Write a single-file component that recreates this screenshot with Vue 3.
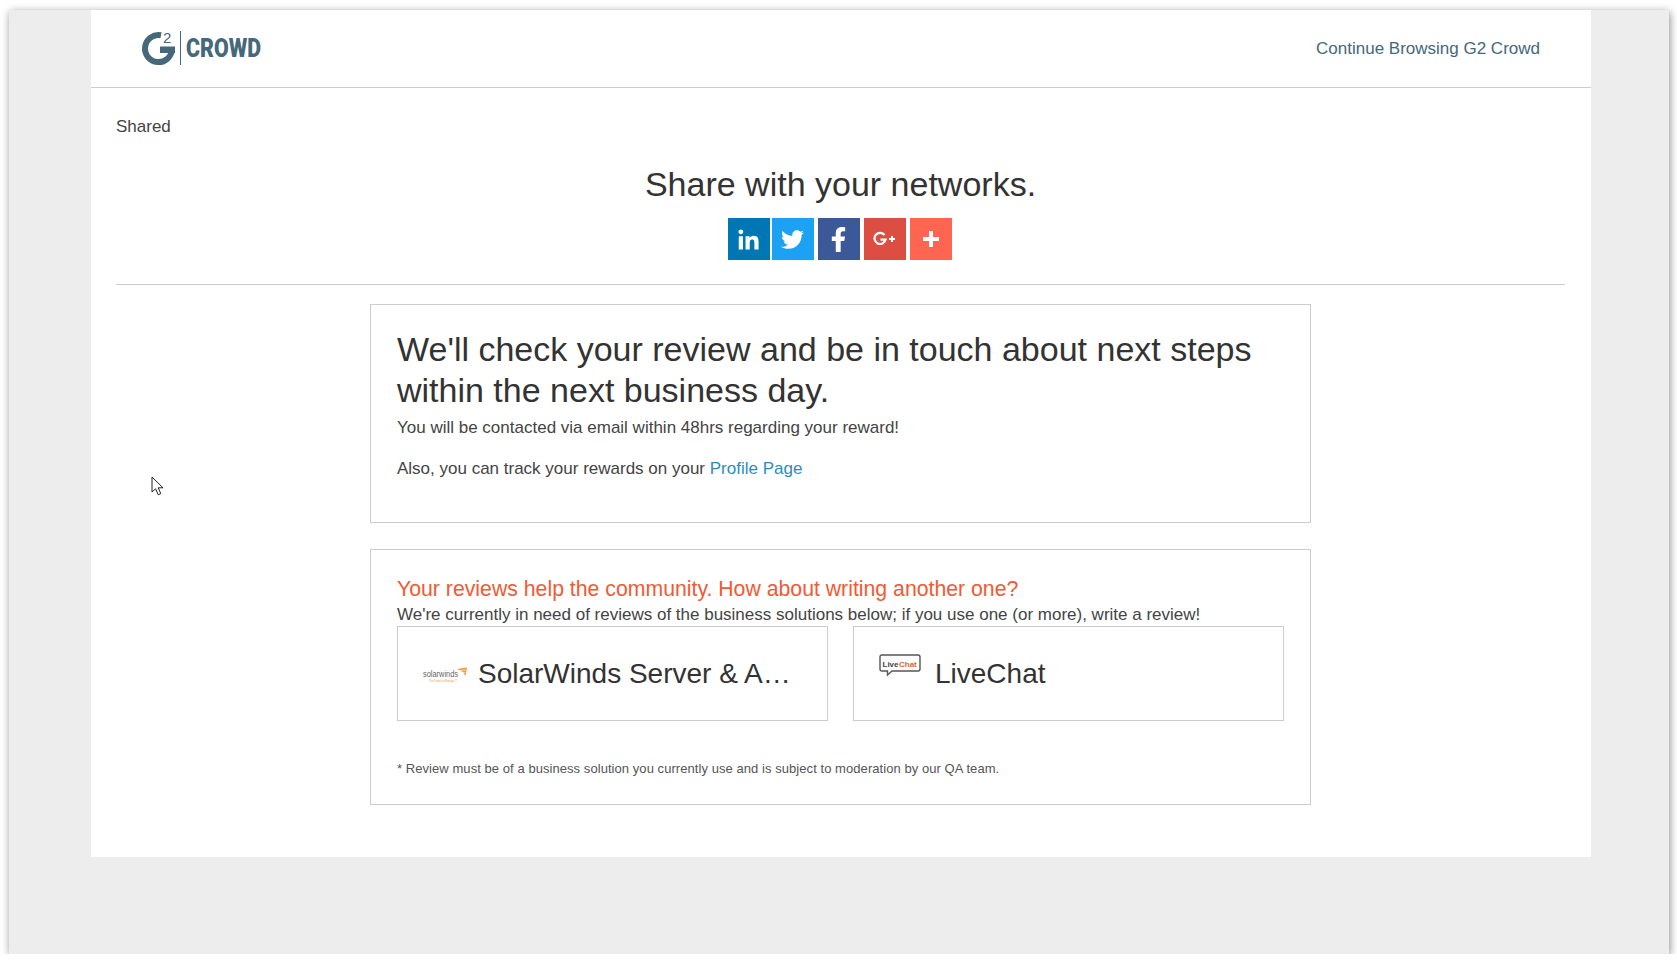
<script setup>
// share buttons, in the order they show on the page
const shareButtons = [
  {
    name: "linkedin",
    viewBox: "0 0 448 512",
    size: 23,
    d: "M100.28 480H7.4V180.9h92.88zM53.79 140.1C24.09 140.1 0 115.5 0 85.8a53.79 53.79 0 0 1 107.58 0c0 29.7-24.1 54.3-53.79 54.3zM447.9 480h-92.68V334.4c0-34.7-.7-79.2-48.29-79.2-48.29 0-55.69 37.7-55.69 76.7V480h-92.78V180.9h89.08v40.8h1.3c12.4-23.5 42.69-48.3 87.88-48.3 94 0 111.28 61.9 111.28 142.3V480z",
  },
  {
    name: "twitter",
    viewBox: "0 0 512 512",
    size: 23,
    d: "M459.37 151.716c.325 4.548.325 9.097.325 13.645 0 138.72-105.583 298.558-298.558 298.558-59.452 0-114.68-17.219-161.137-47.106 8.447.974 16.568 1.299 25.34 1.299 49.055 0 94.213-16.568 130.274-44.832-46.132-.975-84.792-31.188-98.112-72.772 6.498.974 12.995 1.624 19.818 1.624 9.421 0 18.843-1.3 27.614-3.573-48.081-9.747-84.143-51.98-84.143-102.985v-1.299c13.969 7.797 30.214 12.67 47.431 13.319-28.264-18.843-46.781-51.005-46.781-87.391 0-19.492 5.197-37.36 14.294-52.954 51.655 63.675 129.3 105.258 216.365 109.807-1.624-7.797-2.599-15.918-2.599-24.04 0-57.828 46.782-104.934 104.934-104.934 30.213 0 57.502 12.67 76.67 33.137 23.715-4.548 46.456-13.32 66.599-25.34-7.798 24.366-24.366 44.833-46.132 57.827 21.117-2.273 41.584-8.122 60.426-16.243-14.292 20.791-32.161 39.308-52.628 54.253z",
  },
  {
    name: "facebook",
    viewBox: "0 0 320 512",
    size: 25,
    d: "M279.14 288l14.22-92.66h-88.91v-60.13c0-25.35 12.42-50.06 52.24-50.06h40.42V6.26S260.43 0 225.36 0c-73.22 0-121.08 44.38-121.08 124.72v70.62H22.89V288h81.39v224h100.17V288z",
  },
];
</script>

<template>
  <div class="frame">
    <div class="page">
      <header class="topbar">
        <svg class="logo" width="150" height="44" viewBox="0 -4 150 44">
          <path d="M20 4.3 A13.5 13.5 0 1 0 31 18" fill="none" stroke="#45687a" stroke-width="6" />
          <rect x="19" y="15.5" width="15" height="6.5" fill="#45687a" />
          <text x="22" y="12" class="logo-two">2</text>
          <rect x="39" y="0" width="1" height="34" fill="#45687a" />
          <text x="45" y="26" class="logo-word" textLength="75" lengthAdjust="spacingAndGlyphs">CROWD</text>
        </svg>
        <a class="continue">Continue Browsing G2 Crowd</a>
      </header>

      <main class="content">
        <p class="status">Shared</p>

        <section class="share">
          <h2>Share with your networks.</h2>
          <div class="share-buttons">
            <a v-for="btn in shareButtons" :key="btn.name" :class="['share-btn', btn.name]">
              <svg :width="btn.size" :height="btn.size" :viewBox="btn.viewBox" fill="#fff">
                <path :d="btn.d" />
              </svg>
            </a>
            <a class="share-btn gplus">
              <svg width="24" height="16" viewBox="0 0 24 16">
                <path d="M11.6 4 A5.6 5.6 0 1 0 12.6 8.6 H7.5" fill="none" stroke="#fff" stroke-width="2.2" />
                <path d="M16 8 H22 M19 5 V11" stroke="#fff" stroke-width="2" />
              </svg>
            </a>
            <a class="share-btn plus">
              <svg width="18" height="18" viewBox="0 0 18 18">
                <path d="M9 1 V17 M1 9 H17" stroke="#fff" stroke-width="4" />
              </svg>
            </a>
          </div>
        </section>

        <section class="box thanks">
          <h1>We'll check your review and be in touch about next steps within the next business day.</h1>
          <p>You will be contacted via email within 48hrs regarding your reward!</p>
          <p class="track">Also, you can track your rewards on your <a class="link">Profile Page</a></p>
        </section>

        <section class="box more">
          <h3>Your reviews help the community. How about writing another one?</h3>
          <p>We're currently in need of reviews of the business solutions below; if you use one (or more), write a review!</p>
          <div class="products">
            <a class="product">
              <svg class="product-logo sw" width="44" height="20" viewBox="0 0 44 20">
                <text x="0" y="13" class="sw-name" textLength="35" lengthAdjust="spacingAndGlyphs">solarwinds</text>
                <path d="M34 5 L44 3.5 L42.5 12 L40 8 Z" fill="#f6993a" />
                <path d="M36 6.5 L43 6 M38 9 L42.5 8.5" stroke="#fff" stroke-width="0.6" />
                <text x="6" y="17.5" class="sw-tag" textLength="28" lengthAdjust="spacingAndGlyphs">The Power to Manage IT</text>
              </svg>
              <span class="product-name">SolarWinds Server &amp; A…</span>
            </a>
            <a class="product">
              <svg class="product-logo lc" width="42" height="24" viewBox="0 0 42 24">
                <path d="M3 1 H39 Q41 1 41 3 V15 Q41 17 39 17 H13 L8.5 21 V17 H3 Q1 17 1 15 V3 Q1 1 3 1 Z" fill="#fff" stroke="#555" stroke-width="1.4" />
                <text x="3.5" y="12.5" class="lc-text">Live</text>
                <text x="20" y="12.5" class="lc-text lc-chat">Chat</text>
              </svg>
              <span class="product-name">LiveChat</span>
            </a>
          </div>
          <p class="footnote">* Review must be of a business solution you currently use and is subject to moderation by our QA team.</p>
        </section>
      </main>
    </div>

    <svg class="cursor" width="14" height="21" viewBox="0 0 14 21">
      <path d="M1 1 V16 L4.6 12.8 L7.2 18.8 L9.8 17.6 L7.2 11.8 L12 11.8 Z" fill="#fff" stroke="#222" stroke-width="1" />
    </svg>
  </div>
</template>

<style scoped>
.frame {
  position: relative;
  width: 1660px;
  height: 944px;
  margin: 10px 0 0 9px;
  background: #ededed;
  box-shadow: 1px 2px 8px rgba(0, 0, 0, 0.45);
  font-family: "Liberation Sans", Arial, sans-serif;
  color: #333;
}
.page {
  width: 1500px;
  height: 847px;
  margin-left: 82px;
  background: #fff;
}
.topbar {
  display: flex;
  align-items: center;
  justify-content: space-between;
  height: 77px;
  padding: 0 51px 0 50px;
  border-bottom: 1px solid #ccc;
}
.logo {
  display: block;
}
.logo-two {
  font-family: "Liberation Sans", sans-serif;
  font-size: 15px;
  fill: #45687a;
}
.logo-word {
  font-family: "Roboto", sans-serif;
  font-weight: 900;
  font-size: 25px;
  fill: #45687a;
}
.continue {
  font-size: 17px;
  color: #45687a;
}
.content {
  padding: 0 26px 0 25px;
}
.status {
  margin: 0;
  padding-top: 29px;
  font-size: 17px;
  line-height: 20px;
  color: #444;
}
.share {
  padding: 27px 0 24px;
  border-bottom: 1px solid #ccc;
  text-align: center;
}
.share h2 {
  margin: 0;
  font-size: 34px;
  font-weight: 400;
  line-height: 41px;
  color: #333;
}
.share-buttons {
  display: flex;
  justify-content: center;
  gap: 4px;
  margin: 13px 0 0 -2px;
}
.share-btn {
  display: flex;
  align-items: center;
  justify-content: center;
  width: 42px;
  height: 42px;
}
.linkedin { background: #0077b5; }
.twitter { background: #1da1f2; margin-left: -2px; }
.facebook { background: #3b5998; }
.gplus { background: #dc4e41; }
.plus { background: #ff6550; }
.box {
  width: 941px;
  margin: 0 auto;
  padding: 0 25px 0 26px;
  box-sizing: border-box;
  border: 1px solid #ccc;
}
.thanks {
  height: 219px;
  margin-top: 19px;
  padding-top: 24px;
}
.thanks h1 {
  margin: 0 0 5px;
  font-size: 34px;
  font-weight: 400;
  line-height: 41px;
}
.thanks p {
  margin: 0;
  font-size: 17px;
  line-height: 24px;
  color: #444;
}
.thanks .track {
  margin-top: 17px;
}
.link {
  color: #2a8dbb;
}
.more {
  height: 256px;
  margin-top: 26px;
  padding-top: 26px;
}
.more h3 {
  margin: 0;
  font-size: 21.25px;
  font-weight: 400;
  line-height: 27px;
  color: #f15a33;
}
.more p {
  margin: 0;
  font-size: 17px;
  line-height: 23px;
  color: #444;
}
.products {
  display: flex;
  gap: 25px;
}
.product {
  display: flex;
  align-items: center;
  width: 431px;
  height: 95px;
  padding: 0 25px;
  box-sizing: border-box;
  border: 1px solid #ccc;
}
.product-logo {
  flex: none;
}
.sw {
  margin-right: 11px;
}
.lc {
  margin-top: -16px;
  margin-right: 14px;
}
.product-name {
  font-size: 28px;
  white-space: nowrap;
}
.sw-name {
  font-family: "Liberation Sans", sans-serif;
  font-size: 9px;
  fill: #666;
}
.sw-tag {
  font-family: "Liberation Sans", sans-serif;
  font-size: 3.5px;
  fill: #f09a4a;
}
.lc-text {
  font-family: "Liberation Sans", sans-serif;
  font-size: 8px;
  font-weight: 700;
  fill: #444;
}
.lc-chat {
  fill: #d9682e;
}
.more .footnote {
  margin-top: 40px;
  font-size: 13px;
  line-height: 16px;
  letter-spacing: 0.06px;
  color: #555;
}
.cursor {
  position: absolute;
  left: 142px;
  top: 466px;
}
</style>

<style>
html,
body {
  background: #fff;
}
</style>
